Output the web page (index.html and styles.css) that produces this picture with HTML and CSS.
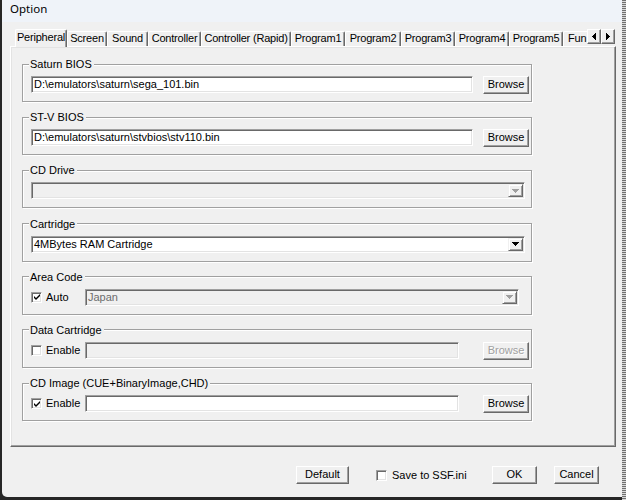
FILE: index.html
```html
<!DOCTYPE html>
<html>
<head>
<meta charset="utf-8">
<title>Option</title>
<link rel="stylesheet" href="styles.css">
</head>
<body>
<div class="screen">
  <div class="window">
    <div class="titlebar">Option</div>
    <div class="client">
      <div class="tabbar">
        <div class="tabstrip">
          <div class="tab sel t52">Peripheral</div>
          <div class="tab t40">Screen</div>
          <div class="tab t41">Sound</div>
          <div class="tab t53">Controller</div>
          <div class="tab t90">Controller (Rapid)</div>
          <div class="tab t54">Program1</div>
          <div class="tab t56">Program2</div>
          <div class="tab t54">Program3</div>
          <div class="tab t54">Program4</div>
          <div class="tab t54">Program5</div>
          <div class="tab t24 fun">Fun</div>
        </div>
        <div class="spin">
          <div class="spinbtn"><svg width="4" height="7" viewBox="0 0 4 7"><path d="M3 0h1v7H3zM2 1h1v5H2zM1 2h1v3H1zM0 3h1v1H0z" fill="#000"/></svg></div>
          <div class="spinbtn"><svg width="4" height="7" viewBox="0 0 4 7"><path d="M0 0h1v7H0zM1 1h1v5H1zM2 2h1v3H2zM3 3h1v1H3z" fill="#000"/></svg></div>
        </div>
      </div>
      <div class="panel">
        <fieldset class="group">
          <legend>Saturn BIOS</legend>
          <div class="row">
            <div class="edit w443">D:\emulators\saturn\sega_101.bin</div>
            <div class="btn browse">Browse</div>
          </div>
        </fieldset>
        <fieldset class="group">
          <legend>ST-V BIOS</legend>
          <div class="row">
            <div class="edit w443">D:\emulators\saturn\stvbios\stv110.bin</div>
            <div class="btn browse">Browse</div>
          </div>
        </fieldset>
        <fieldset class="group">
          <legend>CD Drive</legend>
          <div class="row">
            <div class="combo disabled w494">
              <span class="ctext"></span>
              <span class="drop"><svg width="7" height="4" viewBox="0 0 7 4"><path d="M0 0h7v1H0zM1 1h5v1H1zM2 2h3v1H2zM3 3h1v1H3z"/></svg></span>
            </div>
          </div>
        </fieldset>
        <fieldset class="group">
          <legend>Cartridge</legend>
          <div class="row">
            <div class="combo w494">
              <span class="ctext">4MBytes RAM Cartridge</span>
              <span class="drop"><svg width="7" height="4" viewBox="0 0 7 4"><path d="M0 0h7v1H0zM1 1h5v1H1zM2 2h3v1H2zM3 3h1v1H3z"/></svg></span>
            </div>
          </div>
        </fieldset>
        <fieldset class="group">
          <legend>Area Code</legend>
          <div class="row">
            <span class="check"><svg width="7" height="7" viewBox="0 0 7 7"><path d="M0 2L2 4L6 0V2L2 6L0 4Z" fill="#000"/></svg></span>
            <span class="cklbl">Auto</span>
            <div class="combo disabled w434">
              <span class="ctext">Japan</span>
              <span class="drop"><svg width="7" height="4" viewBox="0 0 7 4"><path d="M0 0h7v1H0zM1 1h5v1H1zM2 2h3v1H2zM3 3h1v1H3z"/></svg></span>
            </div>
          </div>
        </fieldset>
        <fieldset class="group">
          <legend>Data Cartridge</legend>
          <div class="row">
            <span class="check"></span>
            <span class="cklbl">Enable</span>
            <div class="edit disabled w375"></div>
            <div class="btn browse far disabled">Browse</div>
          </div>
        </fieldset>
        <fieldset class="group">
          <legend>CD Image (CUE+BinaryImage,CHD)</legend>
          <div class="row">
            <span class="check"><svg width="7" height="7" viewBox="0 0 7 7"><path d="M0 2L2 4L6 0V2L2 6L0 4Z" fill="#000"/></svg></span>
            <span class="cklbl">Enable</span>
            <div class="edit w375"></div>
            <div class="btn browse far">Browse</div>
          </div>
        </fieldset>
      </div>
      <div class="footer">
        <div class="btn dflt">Default</div>
        <span class="check save"></span>
        <span class="savelbl">Save to SSF.ini</span>
        <div class="btn ok">OK</div>
        <div class="btn cancel">Cancel</div>
      </div>
    </div>
  </div>
  <div class="edge"></div>
</div>
</body>
</html>
```

FILE: styles.css
```css
* { box-sizing: border-box; }

body {
  margin: 0;
  background: #1e1e1e;
}

.screen {
  display: flex;
  width: 626px;
  height: 500px;
  overflow: hidden;
  background: #262626;
}

.window {
  width: 620px;
  height: 497px;
  margin-left: 2px;
  background: #f0f0f0;
  border-bottom-left-radius: 5px;
  font: 11px "Liberation Sans", Arial, sans-serif;
  color: #000;
  overflow: hidden;
}

.titlebar {
  height: 22px;
  background: #eff3f9;
  font: 11.5px "Noto Sans", "Open Sans", sans-serif;
  line-height: 17px;
  padding-left: 8px;
}

.client {
  padding: 7px 6px 0 8px;
}

.edge {
  width: 4px;
  height: 500px;
  background: repeating-linear-gradient(#707070 0 1px, #d9d9d9 1px 2px);
}

/* tabs */
.tabbar {
  display: flex;
  height: 17px;
  padding-left: 5px;
  position: relative;
  z-index: 1;
}

.tabstrip {
  display: flex;
  align-items: flex-end;
  width: 572px;
  height: 18px;
  overflow: hidden;
}

.tab {
  flex: none;
  height: 15px;
  margin-bottom: 1px;
  border-top: 1px solid #fff;
  border-left: 1px solid #fff;
  border-right: 1px solid #696969;
  box-shadow: inset -1px 0 #a0a0a0;
  border-radius: 2px 2px 0 0;
  line-height: 13px;
  text-align: center;
  white-space: nowrap;
  letter-spacing: -0.2px;
}

.tab.sel {
  height: 18px;
  margin-bottom: 0;
  background: #f0f0f0;
  line-height: 15px;
}

.tab.fun {
  text-align: left;
  padding-left: 4px;
  border-right: 0;
  box-shadow: none;
  border-top-right-radius: 0;
}

.t24 { width: 24px; }
.t40 { width: 40px; }
.t41 { width: 41px; }
.t52 { width: 52px; }
.t53 { width: 53px; }
.t54 { width: 54px; }
.t56 { width: 56px; }
.t90 { width: 90px; }

.spin {
  display: flex;
  align-self: flex-start;
}

.spinbtn {
  width: 14px;
  height: 15px;
  display: flex;
  align-items: center;
  justify-content: center;
  background: #f0f0f0;
  border: 1px solid;
  border-color: #fff #696969 #696969 #fff;
  box-shadow: inset -1px -1px #a0a0a0;
}

/* panel */
.panel {
  height: 401px;
  border: 1px solid;
  border-color: #fff #696969 #696969 #fff;
  box-shadow: inset -1px -1px #a0a0a0, inset 1px 1px #e3e3e3;
  padding: 10px 0 0 11px;
}

.group {
  width: 510px;
  min-width: 0;
  margin: 0 0 8.2px 0;
  padding: 5px 2px 7px 8px;
  border: 1px solid #a0a0a0;
  box-shadow: inset 1px 1px #fff, 1px 1px #fff;
}

.group legend {
  margin-left: -2px;
  padding: 0 2px 0 1px;
  line-height: 14px;
  background: #f0f0f0;
}

.row {
  display: flex;
  align-items: flex-start;
  height: 18px;
}

/* edit / combo */
.edit, .combo {
  height: 17px;
  background: #fff;
  border: 1px solid;
  border-color: #a0a0a0 #fff #fff #a0a0a0;
  box-shadow: inset 1px 1px #696969, inset -1px -1px #e3e3e3;
  line-height: 15px;
  padding-left: 2px;
  white-space: nowrap;
  overflow: hidden;
}

.edit.disabled, .combo.disabled {
  background: #f0f0f0;
  color: #6d6d6d;
}

.w443 { width: 443px; }
.w375 { width: 375px; }
.w494 { width: 494px; }
.w434 { width: 434px; }

.combo {
  display: flex;
  padding-right: 1px;
}

.ctext {
  flex: 1;
}

.drop {
  flex: none;
  width: 15px;
  height: 13px;
  margin-top: 1px;
  display: flex;
  align-items: center;
  justify-content: center;
  background: #f0f0f0;
  border: 1px solid;
  border-color: #f0f0f0 #696969 #696969 #f0f0f0;
  box-shadow: inset 1px 1px #fff, inset -1px -1px #a0a0a0;
  fill: #000;
}

.combo.disabled .drop {
  fill: #a0a0a0;
}

/* buttons */
.btn {
  height: 18px;
  background: #f0f0f0;
  border: 1px solid;
  border-color: #fff #696969 #696969 #fff;
  box-shadow: inset -1px -1px #a0a0a0;
  text-align: center;
  line-height: 15px;
  white-space: nowrap;
}

.btn.disabled {
  color: #a0a0a0;
  text-shadow: 1px 1px #fff;
}

.browse {
  width: 46px;
  margin-left: 10px;
}

.browse.far {
  margin-left: 24px;
}

/* checkbox */
.check {
  flex: none;
  width: 11px;
  height: 11px;
  margin-top: 3px;
  display: flex;
  align-items: center;
  justify-content: center;
  background: #fff;
  border: 1px solid;
  border-color: #a0a0a0 #fff #fff #a0a0a0;
  box-shadow: inset 1px 1px #696969, inset -1px -1px #e3e3e3;
  padding: 1px 0 0 1px;
}

.cklbl {
  width: 39px;
  margin-left: 4px;
  line-height: 17px;
}

/* footer */
.footer {
  display: flex;
  align-items: center;
  height: 18px;
  margin-top: 19px;
}

.dflt {
  width: 53px;
  margin-left: 286px;
}

.check.save {
  margin-top: 0;
  margin-left: 27px;
}

.savelbl {
  width: 68px;
  margin-left: 5px;
  white-space: nowrap;
}

.ok {
  width: 45px;
  margin-left: 32px;
}

.cancel {
  width: 45px;
  margin-left: 17px;
}
```
